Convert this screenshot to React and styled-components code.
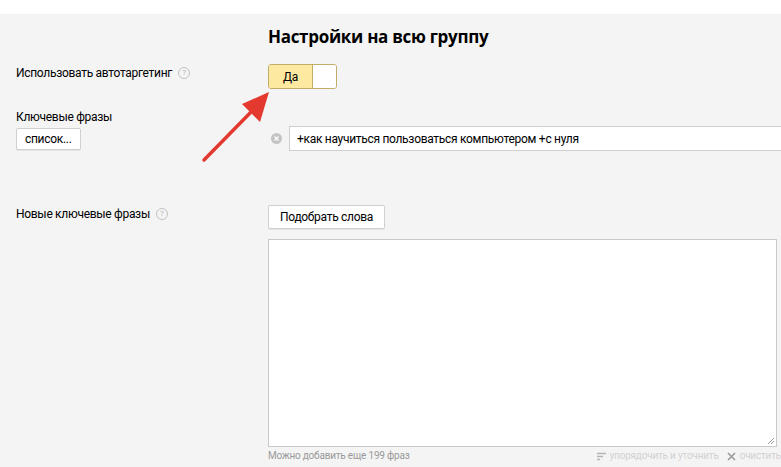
import React from 'react';
import styled, { createGlobalStyle } from 'styled-components';

const GlobalStyle = createGlobalStyle`
  html, body {
    margin: 0;
    padding: 0;
    background: #f4f4f4;
  }
  body {
    font-family: Roboto, "Liberation Sans", Arial, sans-serif;
    font-size: 12px;
    letter-spacing: -0.3px;
    color: #000;
  }
`;

const Page = styled.div`
  position: relative;
  width: 781px;
  height: 467px;
  overflow: hidden;
  background: #f4f4f4;
`;

const TopStrip = styled.div`
  height: 14px;
  background: #fff;
`;

const Row = styled.div`
  display: grid;
  grid-template-columns: 252px 1fr;
  padding-left: 16px;
  margin-top: ${(p) => p.$top || 0}px;
`;

const Title = styled.h1`
  grid-column: 2;
  margin: 0;
  font-family: "Open Sans", "Liberation Sans", Arial, sans-serif;
  font-size: 17px;
  line-height: 22px;
  font-weight: 700;
  color: #000;
  letter-spacing: -0.3px;
`;

const LabelCol = styled.div`
  display: flex;
  flex-direction: column;
  align-items: flex-start;
  padding-top: ${(p) => p.$pad || 0}px;
`;

const Label = styled.div`
  display: flex;
  align-items: center;
  gap: 6px;
  line-height: 16px;
  color: #000;
`;

const Help = styled.span`
  display: inline-flex;
  align-items: center;
  justify-content: center;
  width: 10px;
  height: 10px;
  border: 1px solid #c2c2c2;
  border-radius: 50%;
  color: #b8b8b8;
  font-size: 8px;
  letter-spacing: 0;
  line-height: 1;
`;

const Toggle = styled.div`
  display: flex;
  width: 69px;
  height: 25px;
  box-sizing: border-box;
  border: 1px solid #bfae6a;
  border-radius: 3px;
  overflow: hidden;
`;

const ToggleOn = styled.div`
  flex: 0 0 43px;
  display: flex;
  align-items: center;
  justify-content: center;
  background: #fee9a0;
  border-right: 1px solid #bfae6a;
  font-size: 12px;
`;

const ToggleOff = styled.div`
  flex: 1;
  background: #fff;
`;

const Button = styled.button`
  font-family: inherit;
  font-size: 12px;
  letter-spacing: -0.3px;
  height: ${(p) => p.$h || 22}px;
  padding: 0 ${(p) => p.$px || 8}px;
  margin-top: ${(p) => p.$mt || 0}px;
  background: #fff;
  border: 1px solid #d0d0d0;
  border-radius: 2px;
  box-shadow: 0 1px 0 rgba(0, 0, 0, 0.06);
  color: #000;
  cursor: pointer;
`;

const FieldCol = styled.div`
  display: flex;
  flex-direction: column;
  align-items: flex-start;
  padding-top: ${(p) => p.$pad || 0}px;
`;

const PhraseRow = styled.div`
  display: flex;
  align-items: center;
  gap: 7px;
  width: 100%;
  margin-left: 3px;
`;

const ClearDot = styled.span`
  flex: 0 0 11px;
  width: 11px;
  height: 11px;
  border-radius: 50%;
  background: #c4c4c4;
  display: flex;
  align-items: center;
  justify-content: center;
`;

const PhraseInput = styled.div`
  flex: 1;
  height: 25px;
  box-sizing: border-box;
  border: 1px solid #cfcfcf;
  border-right: none;
  background: #fff;
  padding-left: 7px;
  display: flex;
  align-items: center;
  white-space: nowrap;
`;

const TextArea = styled.div`
  position: relative;
  width: 509px;
  height: 208px;
  box-sizing: border-box;
  margin-top: 10px;
  border: 1px solid #c9c9c9;
  background: #fff;
`;

const Grip = styled.svg`
  position: absolute;
  right: 1px;
  bottom: 1px;
`;

const Footer = styled.div`
  display: flex;
  align-items: center;
  width: 513px;
  margin-top: 2px;
  font-size: 10px;
  letter-spacing: -0.2px;
  line-height: 14px;
`;

const Hint = styled.span`
  color: #9a9a9a;
  flex: 1;
`;

const Action = styled.span`
  display: inline-flex;
  align-items: center;
  gap: 4px;
  color: #d2d2d2;
  margin-left: ${(p) => p.$ml || 0}px;
  white-space: nowrap;
`;

const Arrow = styled.svg`
  position: absolute;
  left: 0;
  top: 0;
  pointer-events: none;
`;

export default function App() {
  return (
    <Page>
      <GlobalStyle />
      <TopStrip />

      <Row $top={12}>
        <Title>Настройки на всю группу</Title>
      </Row>

      <Row $top={16}>
        <LabelCol $pad={1}>
          <Label>
            Использовать автотаргетинг <Help>?</Help>
          </Label>
        </LabelCol>
        <FieldCol>
          <Toggle>
            <ToggleOn>Да</ToggleOn>
            <ToggleOff />
          </Toggle>
        </FieldCol>
      </Row>

      <Row $top={20}>
        <LabelCol>
          <Label>Ключевые фразы</Label>
          <Button $mt={3}>список...</Button>
        </LabelCol>
        <FieldCol $pad={17}>
          <PhraseRow>
            <ClearDot>
              <svg width="5" height="5" viewBox="0 0 5 5">
                <path d="M0.5 0.5 L4.5 4.5 M4.5 0.5 L0.5 4.5" stroke="#fff" strokeWidth="1.2" />
              </svg>
            </ClearDot>
            <PhraseInput>+как научиться пользоваться компьютером +с нуля</PhraseInput>
          </PhraseRow>
        </FieldCol>
      </Row>

      <Row $top={54}>
        <LabelCol $pad={1}>
          <Label>
            Новые ключевые фразы <Help>?</Help>
          </Label>
        </LabelCol>
        <FieldCol>
          <Button $h={24} $px={11}>Подобрать слова</Button>
          <TextArea>
            <Grip width="9" height="9" viewBox="0 0 9 9">
              <path d="M8 2 L2 8 M8 5 L5 8" stroke="#999" strokeWidth="1" />
            </Grip>
          </TextArea>
          <Footer>
            <Hint>Можно добавить еще 199 фраз</Hint>
            <Action>
              <svg width="9" height="9" viewBox="0 0 9 9">
                <path d="M0 1.5 H9 M0 4.5 H6 M0 7.5 H3" stroke="#b5b5b5" strokeWidth="1.3" />
              </svg>
              упорядочить и уточнить
            </Action>
            <Action $ml={8}>
              <svg width="9" height="9" viewBox="0 0 9 9">
                <path d="M1 1 L8 8 M8 1 L1 8" stroke="#9a9a9a" strokeWidth="1.6" />
              </svg>
              очистить
            </Action>
          </Footer>
        </FieldCol>
      </Row>

      <Arrow width="781" height="467" viewBox="0 0 781 467">
        <line x1="204" y1="160" x2="253" y2="110" stroke="#e4392e" strokeWidth="3.5" strokeLinecap="round" />
        <polygon points="269,92 242,104 260,122" fill="#e4392e" />
      </Arrow>
    </Page>
  );
}
